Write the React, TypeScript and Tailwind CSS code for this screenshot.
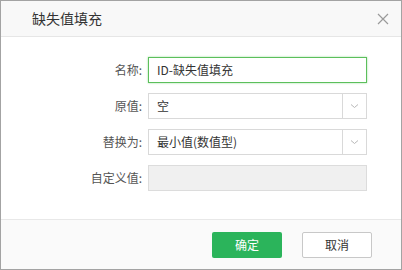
import React from "react";

const font = { fontFamily: '"Noto Sans CJK SC", "Noto Sans", sans-serif' };

function Chevron() {
  return (
    <svg width="9" height="6" viewBox="0 0 9 6" fill="none">
      <path d="M1 1.5 L4.5 4.5 L8 1.5" stroke="#b8b8b8" strokeWidth="1" />
    </svg>
  );
}

function Select({ value }: { value: string }) {
  return (
    <div className="ml-[6px] w-[219px] h-[26px] border border-[#d9d9d9] bg-white flex items-stretch">
      <div className="flex-1 flex items-center pl-[8px] text-[12px] text-[#333]">{value}</div>
      <div className="w-[24px] border-l border-[#d9d9d9] flex items-center justify-center">
        <Chevron />
      </div>
    </div>
  );
}

function Row({ label, children }: { label: string; children: React.ReactNode }) {
  return (
    <div className="flex items-center">
      <div className="w-[141px] text-right text-[12px] text-[#555]">{label}</div>
      {children}
    </div>
  );
}

export default function App() {
  return (
    <div style={font} className="w-[402px] h-[270px] border border-[#a3a3a3] bg-white flex flex-col">
      <div className="h-[36px] shrink-0 bg-[#f8f8f8] border-b border-[#e6e6e6] flex items-center justify-between pl-[31px] pr-[12px]">
        <span className="text-[14px] text-[#333]">缺失值填充</span>
        <svg width="12" height="12" viewBox="0 0 12 12">
          <path d="M1 1 L11 11 M11 1 L1 11" stroke="#9a9a9a" strokeWidth="1.2" />
        </svg>
      </div>
      <div className="flex-1 pt-[20px] flex flex-col gap-[10px]">
        <Row label="名称:">
          <div className="ml-[6px] w-[219px] h-[26px] border border-[#5cbf5c] shadow-[0_0_2px_#9ee09e] bg-white flex items-center pl-[8px] text-[12px] text-[#333]">
            ID-缺失值填充
          </div>
        </Row>
        <Row label="原值:">
          <Select value="空" />
        </Row>
        <Row label="替换为:">
          <Select value="最小值(数值型)" />
        </Row>
        <Row label="自定义值:">
          <div className="ml-[6px] w-[219px] h-[26px] border border-[#dcdcdc] bg-[#f0f0f0]" />
        </Row>
      </div>
      <div className="h-[50px] shrink-0 border-t border-[#e8e8e8] bg-[#fafafa] flex items-center justify-end pr-[29px] gap-[20px]">
        <button className="w-[70px] h-[26px] rounded-[2px] bg-[#2bb45b] text-white text-[12px]">确定</button>
        <button className="w-[70px] h-[26px] rounded-[2px] border border-[#c8c8c8] bg-white text-[#333] text-[12px]">取消</button>
      </div>
    </div>
  );
}
